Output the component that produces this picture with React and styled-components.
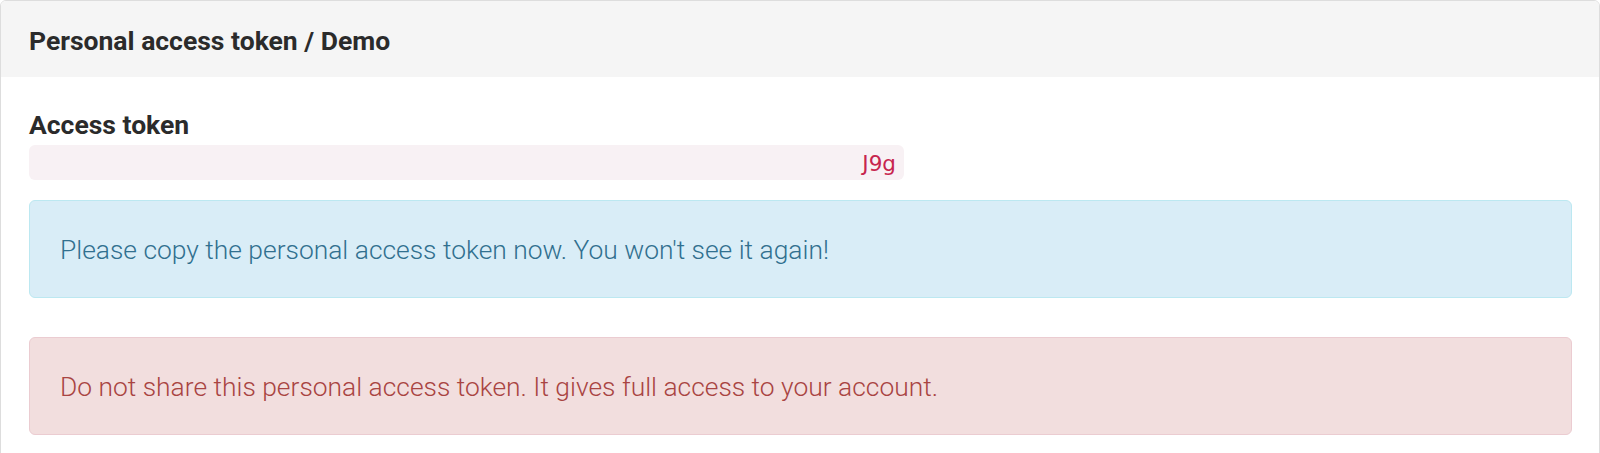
import styled, { createGlobalStyle } from "styled-components";

const GlobalStyle = createGlobalStyle`
  body {
    margin: 0;
    background: #fff;
    font-family: Roboto, "Liberation Sans", sans-serif;
    color: #333;
  }
`;

const Panel = styled.div`
  border: 1px solid #ddd;
  border-radius: 6px 6px 0 0;
  min-height: 480px;
`;

const PanelHeading = styled.div`
  background: #f5f5f5;
  border-radius: 5px 5px 0 0;
  padding: 24px 28px 21px;
  font-size: 26.5px;
  line-height: 31px;
  font-weight: 700;
  color: #2b2b2b;
`;

const PanelBody = styled.div`
  padding: 32px 27px 20px 28px;
`;

const Label = styled.div`
  font-size: 26.5px;
  line-height: 31px;
  font-weight: 700;
  color: #2b2b2b;
`;

const Token = styled.code`
  display: block;
  box-sizing: border-box;
  width: 875px;
  height: 35px;
  margin-top: 5px;
  padding: 3px 8px 0;
  border-radius: 6px;
  background: #f8f1f4;
  color: #c7254e;
  font-family: "DejaVu Sans", "Liberation Sans", sans-serif;
  font-size: 21.5px;
  line-height: 32px;
  text-align: right;
  overflow: hidden;
`;

const tones = {
  info: { bg: "#d9edf7", border: "#bce8f1", color: "#31708f" },
  danger: { bg: "#f2dede", border: "#ebccd1", color: "#a94442" },
};

const Alert = styled.div`
  margin-top: ${(p) => p.$gap}px;
  padding: 32px 30px 30px;
  border: 1px solid ${(p) => tones[p.$tone].border};
  border-radius: 6px;
  background: ${(p) => tones[p.$tone].bg};
  color: ${(p) => tones[p.$tone].color};
  font-size: 26.4px;
  line-height: 34px;
  font-weight: 300;
`;

export default function App() {
  return (
    <>
      <GlobalStyle />
      <Panel>
        <PanelHeading>Personal access token / Demo</PanelHeading>
        <PanelBody>
          <Label>Access token</Label>
          <Token>J9g</Token>
          <Alert $tone="info" $gap={20}>
            Please copy the personal access token now. You won't see it again!
          </Alert>
          <Alert $tone="danger" $gap={39}>
            Do not share this personal access token. It gives full access to
            your account.
          </Alert>
        </PanelBody>
      </Panel>
    </>
  );
}
